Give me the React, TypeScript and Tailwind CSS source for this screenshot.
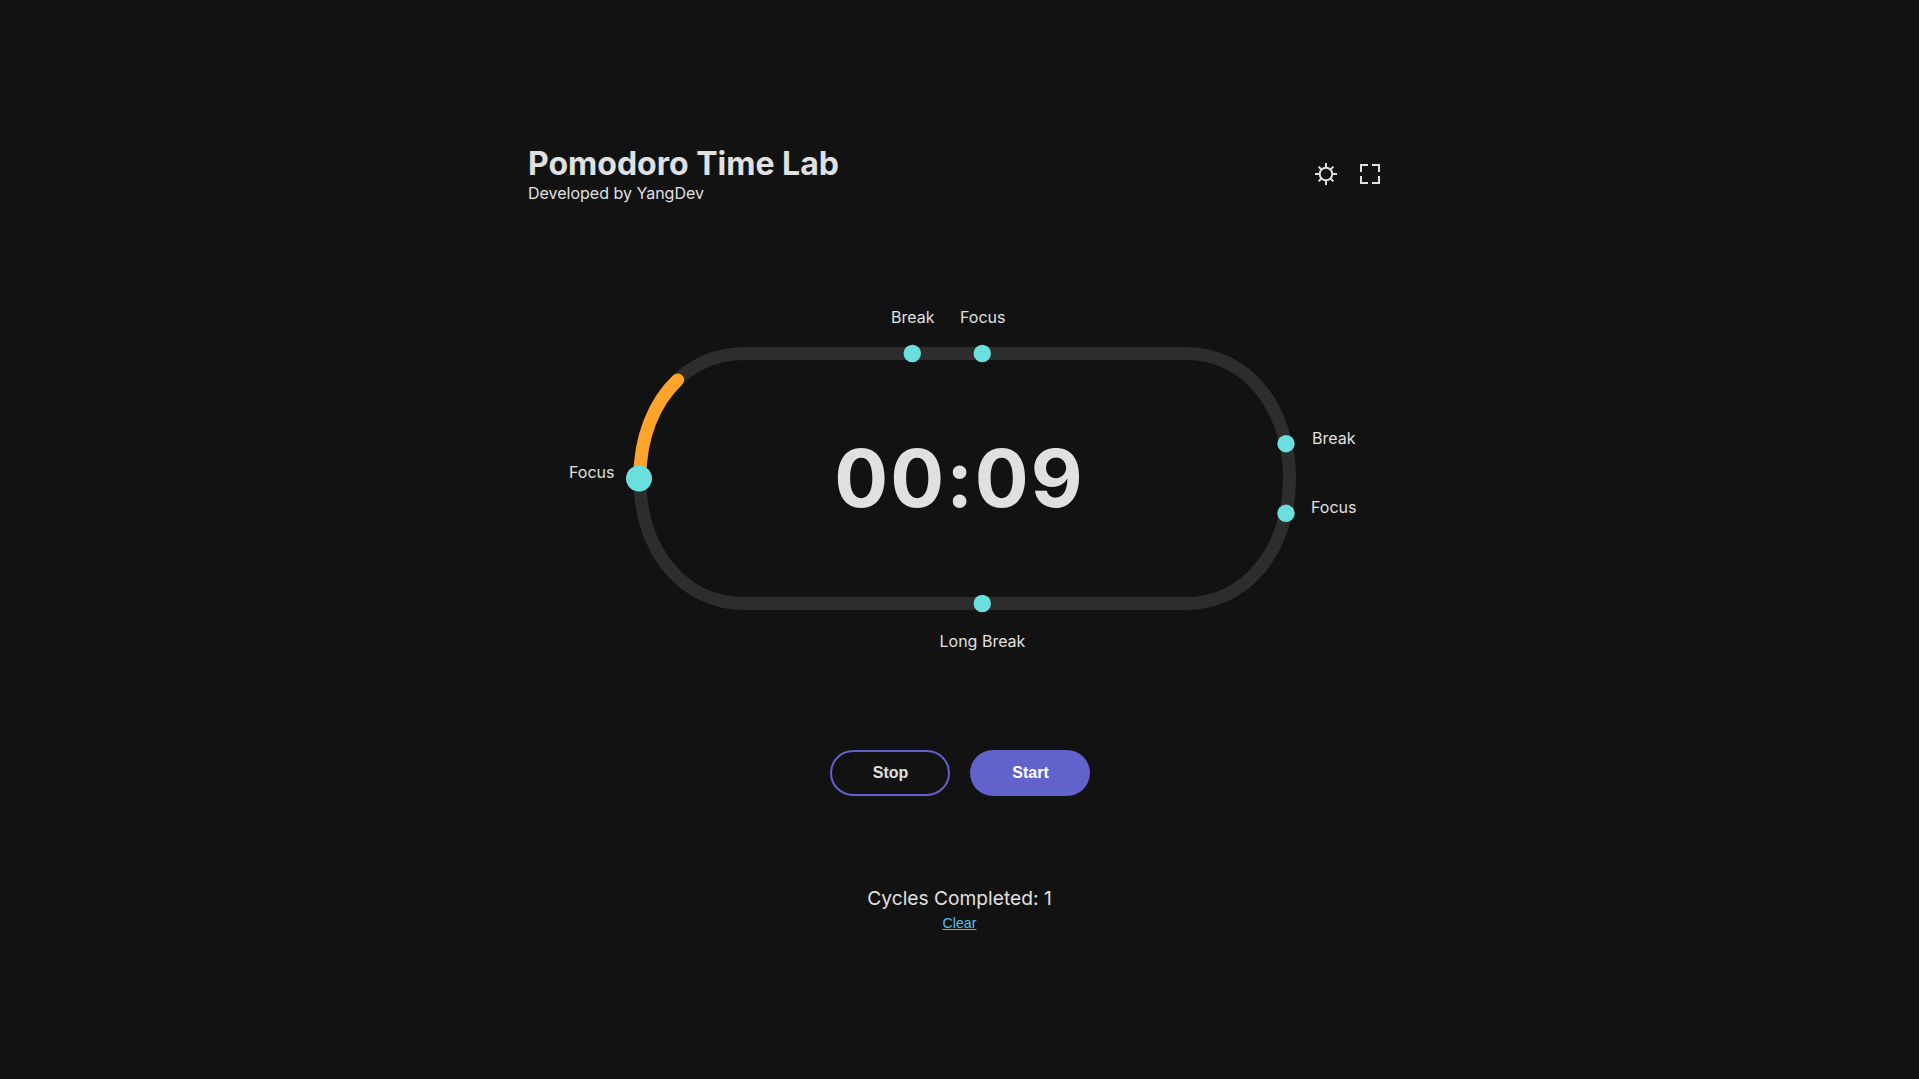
type Marker = { label: string; x: number; y: number; r: number; labelClass: string };

const TRACK =
  "M139.8 188.5C139.8 117 182.500 63.5 245 63.5H686C747 63.5 789.5 118 789.5 188.5S747 313.5 686 313.5H245C182.500 313.5 139.8 260 139.8 188.5Z";

const markers: Marker[] = [
  { label: "Focus", x: 139, y: 188.5, r: 13, labelClass: "left-[69px] top-[170px]" },
  { label: "Break", x: 412.3, y: 63.5, r: 8.7, labelClass: "left-[391px] top-[15px]" },
  { label: "Focus", x: 482.3, y: 63.5, r: 8.7, labelClass: "left-[460px] top-[15px]" },
  { label: "Break", x: 786, y: 153.7, r: 8.7, labelClass: "left-[812px] top-[136px]" },
  { label: "Focus", x: 786, y: 223.3, r: 8.7, labelClass: "left-[811px] top-[205px]" },
  { label: "Long Break", x: 482.3, y: 313.5, r: 8.7, labelClass: "left-[439.5px] top-[339px]" },
];

function SunIcon() {
  return (
    <svg className="size-6" viewBox="0 0 24 24" fill="none" stroke="#e0e0e0" strokeWidth="2">
      <circle cx="12" cy="12" r="6.3" />
      <path d="M12 1v4M12 19v4M1 12h4M19 12h4M4.6 4.6l2.6 2.6M16.8 16.8l2.6 2.6M4.6 19.4l2.6-2.6M16.8 7.2l2.6-2.6" />
    </svg>
  );
}

function FullscreenIcon() {
  return (
    <svg className="size-6" viewBox="0 0 24 24" fill="none" stroke="#e0e0e0" strokeWidth="2">
      <path d="M3 10V3h7M14 3h7v7M21 14v7h-7M10 21H3v-7" />
    </svg>
  );
}

export default function App() {
  return (
    <main className="flex h-screen w-full flex-col items-center overflow-hidden bg-[#121212] pt-[144px] font-['Inter',sans-serif] text-base text-[#e0e0e0]">
      <header className="flex h-[60px] w-[863px] justify-between">
        <div>
          <h1 className="text-[32px] leading-[39px] font-bold">Pomodoro Time Lab</h1>
          <p className="leading-[20px]">Developed by YangDev</p>
        </div>
        <div className="flex gap-5 pt-[18px] pr-[9px]">
          <button className="size-6"><SunIcon /></button>
          <button className="size-6"><FullscreenIcon /></button>
        </div>
      </header>

      <section className="relative mt-[86px] h-[380px] w-[919px]">
        <svg className="block h-full w-full" viewBox="0 0 919 380" fill="none" strokeWidth="13">
          <path d={TRACK} stroke="#2d2d2d" />
          <path d={TRACK} stroke="#ffa42b" strokeLinecap="round" strokeDasharray="108.500 3000" />
          {markers.map((m, i) => (
            <circle key={i} cx={m.x} cy={m.y} r={m.r} fill="#6bdede" stroke="none" />
          ))}
        </svg>
        {markers.map((m, i) => (
          <span key={i} className={`absolute leading-6 whitespace-nowrap ${m.labelClass}`}>{m.label}</span>
        ))}
        <div className="absolute top-[139px] left-0 w-full text-center text-[80px] leading-[97px] font-bold tracking-[2px] [font-feature-settings:'calt'_0]">
          00:09
        </div>
      </section>

      <div className="mt-[80px] flex gap-5 font-['Liberation_Sans',sans-serif] font-bold">
        <button className="h-[46px] w-[120px] rounded-full border-2 border-[#6262cc] pl-[2px]">Stop</button>
        <button className="h-[46px] w-[120px] rounded-full bg-[#6262cc] pl-[2px] text-white">Start</button>
      </div>

      <footer className="mt-[90px] flex flex-col items-center">
        <p className="text-[19.2px] leading-6">Cycles Completed: 1</p>
        <button className="mt-[3px] font-['Liberation_Sans',sans-serif] text-[14.2px] leading-5 text-[#4fc0ea] underline">Clear</button>
      </footer>
    </main>
  );
}
